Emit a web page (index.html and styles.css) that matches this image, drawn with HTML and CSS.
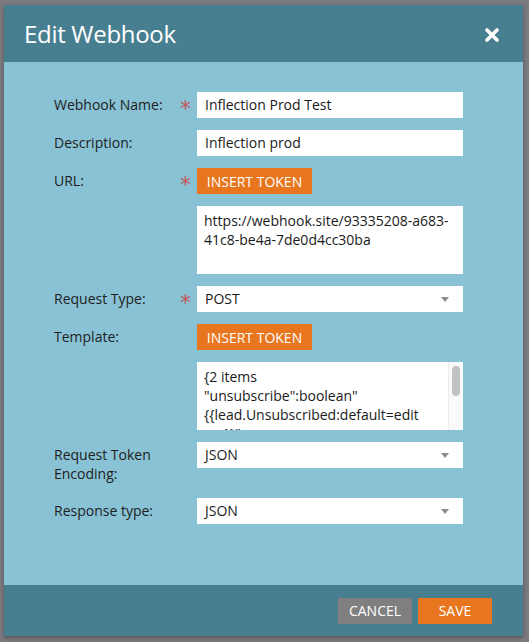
FILE: index.html
```html
<!DOCTYPE html>
<html>
<head>
<meta charset="utf-8">
<link rel="stylesheet" href="styles.css">
</head>
<body>
<div class="dialog">
  <div class="header">
    <h1 class="title">Edit Webhook</h1>
    <svg class="close" width="14" height="14" viewBox="0 0 14 14"><path d="M2 2 L12 12 M12 2 L2 12" stroke="#fff" stroke-width="3.6" stroke-linecap="round"/></svg>
  </div>
  <div class="body">
    <div class="row">
      <div class="label">Webhook Name:</div>
      <div class="req">*</div>
      <div class="field"><div class="input">Inflection Prod Test</div></div>
    </div>
    <div class="row">
      <div class="label">Description:</div>
      <div class="req"></div>
      <div class="field"><div class="input">Inflection prod</div></div>
    </div>
    <div class="row">
      <div class="label">URL:</div>
      <div class="req">*</div>
      <div class="field"><button class="btn btn-orange token">INSERT TOKEN</button></div>
    </div>
    <div class="row">
      <div class="label"></div>
      <div class="req"></div>
      <div class="field"><div class="textarea"><div class="ta-text">https://webhook.site/93335208-a683-<br>41c8-be4a-7de0d4cc30ba</div></div></div>
    </div>
    <div class="row">
      <div class="label">Request Type:</div>
      <div class="req">*</div>
      <div class="field"><div class="input select">POST<span class="arrow"></span></div></div>
    </div>
    <div class="row">
      <div class="label">Template:</div>
      <div class="req"></div>
      <div class="field"><button class="btn btn-orange token">INSERT TOKEN</button></div>
    </div>
    <div class="row">
      <div class="label"></div>
      <div class="req"></div>
      <div class="field"><div class="textarea"><div class="ta-text">{2 items<br>"unsubscribe":boolean"<br>{{lead.Unsubscribed:default=edit<br>me}}"</div><div class="scroll"><div class="thumb"></div></div></div></div>
    </div>
    <div class="row">
      <div class="label two">Request Token<br>Encoding:</div>
      <div class="req"></div>
      <div class="field"><div class="input select">JSON<span class="arrow"></span></div></div>
    </div>
    <div class="row">
      <div class="label">Response type:</div>
      <div class="req"></div>
      <div class="field"><div class="input select">JSON<span class="arrow"></span></div></div>
    </div>
  </div>
  <div class="footer">
    <button class="btn btn-gray">CANCEL</button>
    <button class="btn btn-orange">SAVE</button>
  </div>
</div>
</body>
</html>
```

FILE: styles.css
```css
html, body {
  margin: 0;
  padding: 0;
}
body {
  background: #7b7a7e;
  width: 529px;
  height: 642px;
  overflow: hidden;
  font-family: "Open Sans", "Noto Sans", sans-serif;
  padding: 5px 6px 6px 4px;
  box-sizing: border-box;
}
.dialog {
  width: 519px;
  height: 631px;
  display: flex;
  flex-direction: column;
  box-shadow: 0 2px 4px rgba(0,0,0,0.3);
}
.header {
  background: #477f91;
  height: 57px;
  display: flex;
  align-items: center;
  justify-content: space-between;
  padding: 0 24px 0 20px;
  flex: none;
}
.title {
  margin: 0;
  color: #fff;
  font-weight: 400;
  font-size: 24px;
  letter-spacing: -0.3px;
}
.close {
  display: block;
  margin-top: 2px;
}
.body {
  background: #88c2d4;
  flex: 1;
  padding: 30px 0 0 50px;
  display: flex;
  flex-direction: column;
  gap: 12px;
}
.row {
  display: flex;
  align-items: flex-start;
}
.label {
  width: 126px;
  font-size: 14px;
  line-height: 19px;
  padding-top: 3px;
  color: #1e1e1e;
  flex: none;
}
.label.two {
  padding-bottom: 3px;
}
.req {
  width: 17px;
  color: #c4555b;
  font-size: 22px;
  line-height: 26px;
  height: 26px;
  padding-top: 4px;
  box-sizing: border-box;
  flex: none;
  font-family: "DejaVu Sans", sans-serif;
}
.field {
  width: 266px;
}
.input {
  background: #fff;
  height: 26px;
  line-height: 26px;
  padding: 0 8px;
  font-size: 14px;
  color: #1a1a1a;
  position: relative;
}
.select .arrow {
  position: absolute;
  right: 14px;
  top: 11px;
  width: 0;
  height: 0;
  border-left: 4.5px solid transparent;
  border-right: 4.5px solid transparent;
  border-top: 5px solid #8d8d8d;
}
.textarea {
  background: #fff;
  height: 68px;
  display: flex;
  overflow: hidden;
}
.ta-text {
  flex: 1;
  padding: 5px 7px;
  font-size: 14px;
  line-height: 19px;
  color: #1a1a1a;
  white-space: nowrap;
  overflow: hidden;
}
.scroll {
  width: 15px;
  flex: none;
  border-left: 1px solid #ececec;
  background: #fafafa;
  display: flex;
  justify-content: center;
  padding-top: 4px;
  box-sizing: border-box;
}
.thumb {
  width: 8px;
  height: 30px;
  border-radius: 4px;
  background: #c2c2c2;
}
.btn {
  border: none;
  font-family: inherit;
  font-size: 14px;
  color: #fff;
  height: 26px;
  padding: 0;
  display: block;
  cursor: pointer;
}
.btn-orange {
  background: #e8761e;
}
.btn-gray {
  background: #7f7f7f;
}
.token {
  width: 115px;
}
.footer {
  background: #477f91;
  height: 51px;
  flex: none;
  display: flex;
  justify-content: flex-end;
  align-items: center;
  gap: 6px;
  padding-right: 31px;
}
.footer .btn {
  width: 74px;
}
```
